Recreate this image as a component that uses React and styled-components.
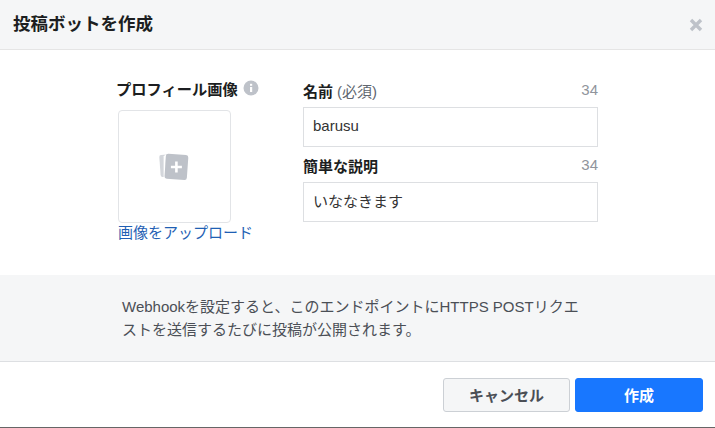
import React from "react";
import styled, { createGlobalStyle } from "styled-components";

const GlobalStyle = createGlobalStyle`
  html, body {
    margin: 0;
    padding: 0;
    background: #fff;
  }
  body {
    font-family: "Liberation Sans", "Noto Sans CJK JP", sans-serif;
    color: #1c1e21;
  }
`;

const Dialog = styled.div`
  width: 715px;
  height: 428px;
  box-sizing: border-box;
  display: flex;
  flex-direction: column;
  background: #fff;
  border-bottom: 1px solid #666;
  overflow: hidden;
`;

const Header = styled.div`
  height: 50px;
  flex: none;
  box-sizing: border-box;
  display: flex;
  align-items: center;
  justify-content: space-between;
  padding: 0 12px 0 13px;
  background: #f5f6f7;
  border-bottom: 1px solid #e5e5e5;
`;

const Title = styled.h1`
  margin: 0 0 4px;
  font-size: 17.5px;
  font-weight: 700;
  color: #1c1e21;
`;

const CloseButton = styled.button`
  border: 0;
  padding: 0;
  background: none;
  display: flex;
`;

const Body = styled.div`
  height: 225px;
  flex: none;
  box-sizing: border-box;
  display: flex;
  padding: 30px 117px 0 118px;
  gap: 72px;
`;

const ImageColumn = styled.div`
  width: 113px;
  flex: none;
`;

const ImageLabel = styled.div`
  display: flex;
  align-items: center;
  gap: 5px;
  margin-left: -2px;
  width: 160px;
  height: 16px;
  font-size: 15.25px;
  font-weight: 700;
`;

const Dropzone = styled.div`
  width: 113px;
  height: 113px;
  box-sizing: border-box;
  margin-top: 14px;
  padding-right: 2px;
  display: flex;
  align-items: center;
  justify-content: center;
  background: #fff;
  border: 1px solid #e2e4e7;
  border-radius: 4px;
`;

const UploadLink = styled.a`
  display: block;
  width: 160px;
  font-size: 15px;
  line-height: 20px;
  color: #1f5fb4;
`;

const Fields = styled.div`
  flex: 1;
  min-width: 0;
  display: flex;
  flex-direction: column;
`;

const FieldHead = styled.div`
  display: flex;
  justify-content: space-between;
  align-items: center;
  height: 20px;
  margin-top: ${(p) => p.$top}px;
  margin-bottom: 2px;
  font-size: 15px;
`;

const FieldName = styled.span`
  font-weight: 700;
`;

const Required = styled.span`
  margin-left: 4px;
  font-weight: 400;
  color: #606770;
`;

const Counter = styled.span`
  padding-bottom: 2px;
  color: #90949c;
`;

const Input = styled.input`
  height: 40px;
  box-sizing: border-box;
  width: 100%;
  margin-top: ${(p) => p.$top}px;
  padding: 0 9px 4px;
  border: 1px solid #dddfe2;
  border-radius: 0;
  outline: none;
  font: inherit;
  font-size: 15px;
  color: #333;
`;

const Notice = styled.div`
  height: 87px;
  flex: none;
  box-sizing: border-box;
  padding: 20px 133px 0 122px;
  background: #f5f6f7;
  border-bottom: 1px solid #dddfe2;
  font-size: 15px;
  line-height: 23px;
  color: #4b4f56;
`;

const Footer = styled.div`
  flex: 1;
  display: flex;
  justify-content: flex-end;
  gap: 5px;
  padding: 16px 12px 0 0;
`;

const Button = styled.button`
  width: ${(p) => (p.$primary ? 128 : 127)}px;
  height: 34px;
  box-sizing: border-box;
  padding: 0 0 2px;
  border: 1px solid ${(p) => (p.$primary ? "#1877ff" : "#ccd0d5")};
  border-radius: 3px;
  background: ${(p) => (p.$primary ? "#1877ff" : "#f5f6f7")};
  color: ${(p) => (p.$primary ? "#fff" : "#4b4f56")};
  font: inherit;
  font-size: 15px;
  font-weight: 700;
`;

function CloseIcon() {
  return (
    <svg width="14" height="14" viewBox="0 0 14 14">
      <path d="M2 2 L12 12 M12 2 L2 12" stroke="#bec2c9" strokeWidth="3.4" fill="none" />
    </svg>
  );
}

function InfoIcon() {
  return (
    <svg width="16" height="16" viewBox="0 0 16 16">
      <circle cx="8" cy="8" r="7.5" fill="#bec2c9" />
      <rect x="7" y="7" width="2.2" height="5" fill="#fff" />
      <rect x="7" y="3.8" width="2.2" height="2" fill="#fff" />
    </svg>
  );
}

function AddPhotoIcon() {
  return (
    <svg width="32" height="30" viewBox="0 0 32 30">
      <path d="M9 2.5 L3 3 Q1.2 3.2 1.3 5 L2.6 23 Q2.8 25 4.6 25 L6 25 Z" fill="#d3d6db" />
      <path d="M8 2 L5.6 4.5 L5.6 25 L7 25.5 Z" fill="#fff" />
      <rect x="7.2" y="2.4" width="22.4" height="25" rx="2.4" transform="rotate(4 18 15)" fill="#bec2c9" />
      <path d="M18.4 9.5 V20.5 M12.9 15 H23.9" stroke="#fff" strokeWidth="2.6" fill="none" />
    </svg>
  );
}

export default function App() {
  return (
    <>
      <GlobalStyle />
      <Dialog>
        <Header>
          <Title>投稿ボットを作成</Title>
          <CloseButton>
            <CloseIcon />
          </CloseButton>
        </Header>
        <Body>
          <ImageColumn>
            <ImageLabel>
              プロフィール画像
              <InfoIcon />
            </ImageLabel>
            <Dropzone>
              <AddPhotoIcon />
            </Dropzone>
            <UploadLink>画像をアップロード</UploadLink>
          </ImageColumn>
          <Fields>
            <FieldHead $top={0}>
              <span>
                <FieldName>名前</FieldName>
                <Required>(必須)</Required>
              </span>
              <Counter>34</Counter>
            </FieldHead>
            <Input $top={5} defaultValue="barusu" />
            <FieldHead $top={8}>
              <FieldName>簡単な説明</FieldName>
              <Counter>34</Counter>
            </FieldHead>
            <Input $top={5} defaultValue="いななきます" />
          </Fields>
        </Body>
        <Notice>
          Webhookを設定すると、このエンドポイントにHTTPS POSTリクエストを送信するたびに投稿が公開されます。
        </Notice>
        <Footer>
          <Button>キャンセル</Button>
          <Button $primary>作成</Button>
        </Footer>
      </Dialog>
    </>
  );
}
